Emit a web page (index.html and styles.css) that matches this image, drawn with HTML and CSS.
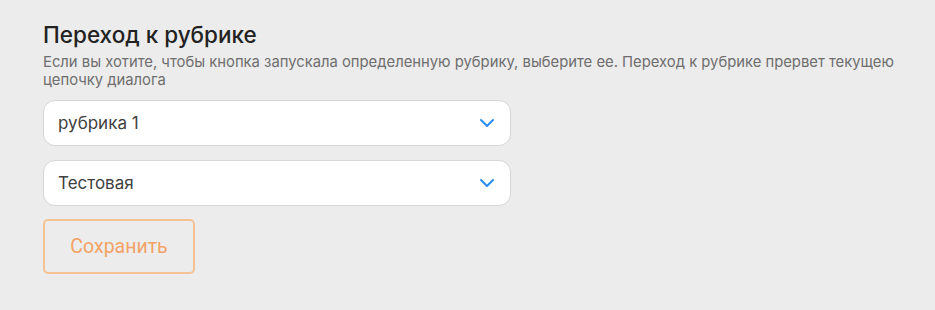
FILE: index.html
```html
<!DOCTYPE html>
<html lang="ru">
<head>
<meta charset="utf-8">
<link rel="stylesheet" href="styles.css">
</head>
<body>
<div class="panel">
  <h2 class="title">Переход к рубрике</h2>
  <p class="desc">Если вы хотите, чтобы кнопка запускала определенную рубрику, выберите ее. Переход к рубрике прервет текущею цепочку диалога</p>
  <div class="select">
    <span class="value">рубрика 1</span>
    <svg class="chev" width="16" height="10" viewBox="0 0 16 10"><path d="M2 2 L8 8 L14 2" fill="none" stroke="#2a8cf0" stroke-width="2" stroke-linecap="round" stroke-linejoin="round"/></svg>
  </div>
  <div class="select">
    <span class="value">Тестовая</span>
    <svg class="chev" width="16" height="10" viewBox="0 0 16 10"><path d="M2 2 L8 8 L14 2" fill="none" stroke="#2a8cf0" stroke-width="2" stroke-linecap="round" stroke-linejoin="round"/></svg>
  </div>
  <button class="save">Сохранить</button>
</div>
</body>
</html>
```
FILE: styles.css
```css
html, body {
  margin: 0;
  background: #ececec;
  height: 100%;
}
.panel {
  padding: 21px 0 0 43px;
  width: 860px;
  font-family: Inter, "Noto Sans", sans-serif;
}
.title {
  margin: 0;
  font-size: 22.5px;
  font-weight: 500;
  color: #222;
  line-height: 28px;
}
.desc {
  margin: 4px 0 0;
  font-size: 14.8px;
  line-height: 18px;
  color: #6e6e6e;
}
.select {
  box-sizing: border-box;
  width: 468px;
  height: 46px;
  margin-top: 11px;
  background: #fff;
  border: 1px solid #d6d6d6;
  border-radius: 12px;
  display: flex;
  align-items: center;
  justify-content: space-between;
  padding: 0 15px 0 14px;
}
.select + .select { margin-top: 14px; }
.value {
  font-size: 17px;
  color: #404040;
}
.chev { display: block; }
.save {
  display: block;
  margin-top: 13px;
  box-sizing: border-box;
  width: 152px;
  height: 55px;
  background: transparent;
  border-width: 2px;
  border-style: solid;
  border-color: #f5c294;
  border-radius: 5px;
  color: #f3a265;
  font-family: Roboto, sans-serif;
  font-size: 19.5px;
}
```
